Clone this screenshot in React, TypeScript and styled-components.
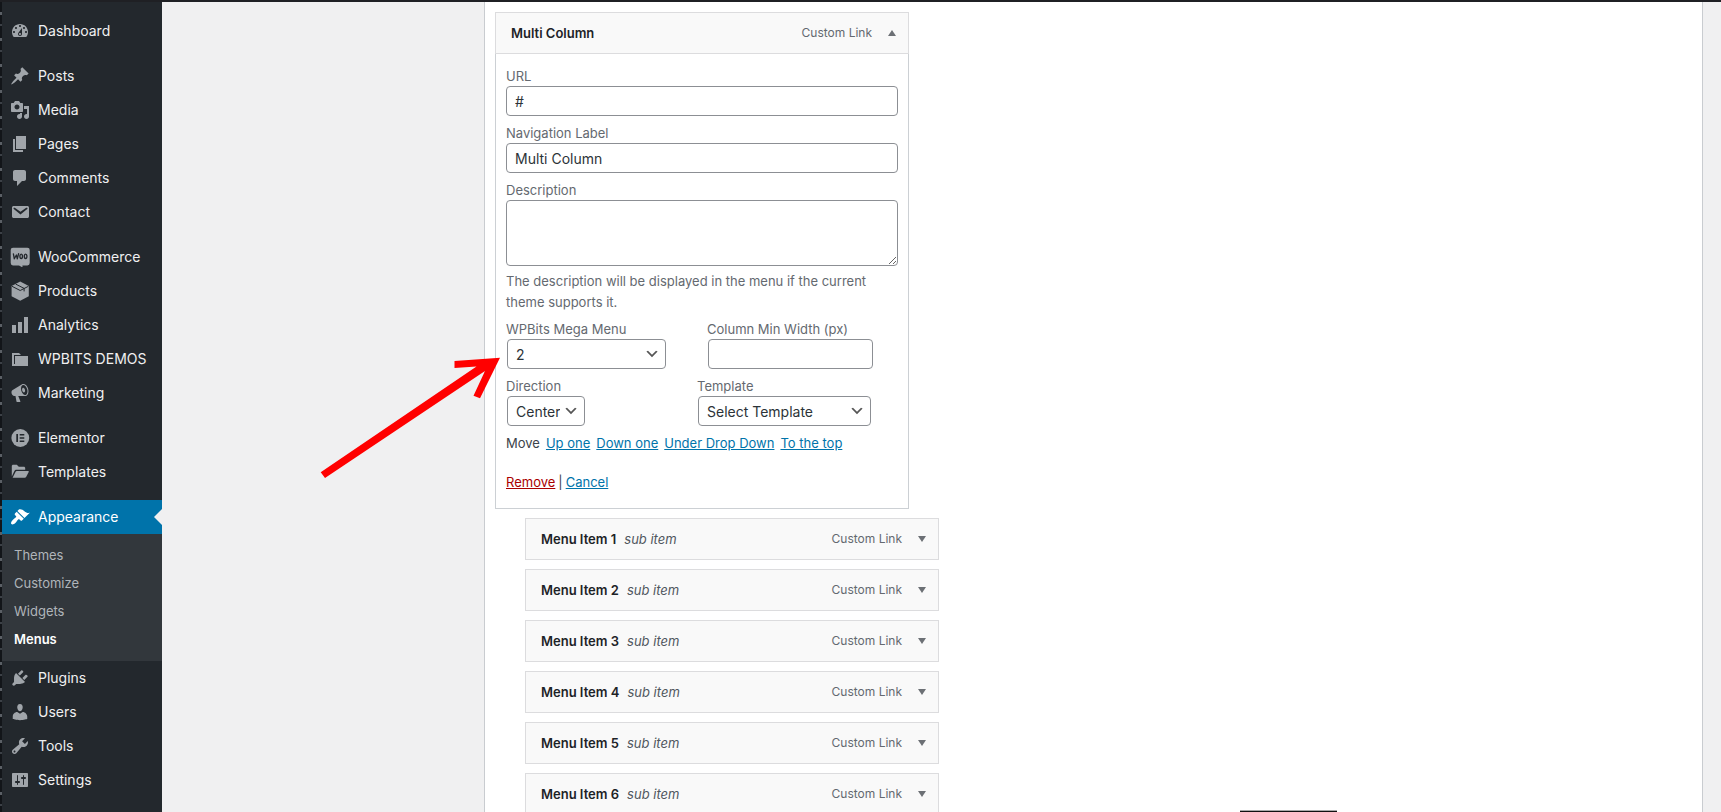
import React from "react";
import styled, { createGlobalStyle, css } from "styled-components";

const GlobalStyle = createGlobalStyle`
  *, *::before, *::after { box-sizing: border-box; }
  html { scrollbar-width: none; }
  body {
    margin: 0;
    background: #f0f0f1;
    color: #3c434a;
    font-family: Inter, "Liberation Sans", sans-serif;
    font-size: 13px;
    line-height: 20px;
  }
  ul { list-style: none; margin: 0; padding: 0; }
`;

const Page = styled.div`
  position: relative;
  height: 100vh;
  overflow: hidden;
  display: flex;
  border-top: 2px solid #1f2024;
`;

const WindowEdge = styled.div`
  flex: none;
  width: 2px;
  background: repeating-linear-gradient(#121519 0 10px, #5b6066 10px 13px, #121519 13px 22px, #3c4147 22px 24px, #121519 24px 26px);
`;

const Sidebar = styled.nav`
  flex: none;
  width: 160px;
  padding-top: 12px;
  background: #23282d;
`;

const MenuGroup = styled.ul`
  margin-bottom: 11px;
`;

const MenuLink = styled.a<{ $active?: boolean }>`
  position: relative;
  display: flex;
  align-items: center;
  gap: 8px;
  height: 34px;
  padding-left: 8px;
  color: ${(p) => (p.$active ? "#fff" : "#f0f0f1")};
  font-size: 14px;
  text-decoration: none;
  white-space: nowrap;
  svg {
    flex: none;
    width: 20px;
    height: 20px;
    fill: ${(p) => (p.$active ? "#fff" : "#a0a5aa")};
  }
  ${(p) =>
    p.$active &&
    css`
      background: #0073aa;
      &::after {
        content: "";
        position: absolute;
        right: 0;
        top: 9px;
        border: 8px solid transparent;
        border-left-width: 0;
        border-right-color: #f0f0f1;
      }
    `}
`;

const SubMenu = styled.ul`
  padding: 7px 0 8px;
  background: #32373c;
`;

const SubLink = styled.a<{ $current?: boolean }>`
  display: block;
  padding-left: 12px;
  font-size: 13px;
  line-height: 28px;
  text-decoration: none;
  color: ${(p) => (p.$current ? "#fff" : "#b0b5ba")};
  font-weight: ${(p) => (p.$current ? 600 : 400)};
`;

const Main = styled.main`
  flex: 1;
  min-width: 0;
  display: flex;
  padding: 0 18px 0 322px;
`;

const Panel = styled.section`
  flex: 1;
  min-width: 0;
  background: #fff;
  border: solid #c9ccd0;
  border-width: 0 1px;
  padding: 10px 10px 0;
`;

const ItemList = styled.ul`
  display: flex;
  flex-direction: column;
  gap: 9px;
`;

const Item = styled.li<{ $depth?: number }>`
  position: relative;
  width: 414px;
  margin-left: ${(p) => (p.$depth ?? 0) * 30}px;
`;

const ItemBar = styled.div`
  display: flex;
  align-items: center;
  height: 42px;
  padding: 0 6px 0 15px;
  background: #f9f9f9;
  border: 1px solid #dcdcde;
`;

const ItemTitle = styled.span`
  color: #1d2327;
  font-weight: 600;
`;

const SubTag = styled.span`
  margin-left: 8px;
  color: #50575e;
  font-style: italic;
`;

const ItemType = styled.span`
  margin-left: auto;
  margin-right: 10px;
  color: #646970;
  font-size: 12px;
`;

const Toggle = styled.button`
  display: grid;
  place-items: center;
  width: 20px;
  height: 20px;
  padding: 0;
  border: 0;
  background: none;
  svg {
    width: 8px;
    height: 6px;
    fill: #6c7075;
  }
`;

const Settings = styled.form`
  padding: 12px 10px 16px;
  border: 1px solid #ccd0d4;
  border-top: 0;
`;

const Field = styled.div`
  display: flex;
  flex-direction: column;
  align-items: flex-start;
  margin-bottom: 7px;
`;

const Label = styled.label`
  color: #646970;
  line-height: 20px;
`;

const controlStyle = css`
  border: 1px solid #8c8f94;
  border-radius: 4px;
  background: #fff;
  color: #2c3338;
  font-family: inherit;
  font-size: 14px;
  outline: none;
`;

const TextInput = styled.input<{ $width?: number }>`
  ${controlStyle}
  width: ${(p) => (p.$width ? `${p.$width}px` : "100%")};
  margin: ${(p) => (p.$width ? "0 1px" : "0")};
  height: 30px;
  padding: 0 8px;
`;

const TextArea = styled.textarea`
  ${controlStyle}
  display: block;
  width: 100%;
  height: 66px;
  padding: 2px 6px;
`;

const Hint = styled.p`
  margin: 5px 0 6px;
  color: #646970;
  line-height: 21px;
`;

const FieldRow = styled.div<{ $first: number }>`
  display: grid;
  grid-template-columns: ${(p) => p.$first}px 1fr;
`;

const SelectBox = styled.div<{ $width: number }>`
  position: relative;
  width: ${(p) => p.$width}px;
  margin: 0 1px;
  svg {
    position: absolute;
    right: 6px;
    top: 7px;
    width: 16px;
    height: 16px;
    pointer-events: none;
  }
`;

const Select = styled.select`
  ${controlStyle}
  appearance: none;
  display: block;
  width: 100%;
  height: 30px;
  padding: 0 24px 0 8px;
`;

const MoveLinks = styled.div`
  display: flex;
  gap: 6px;
  margin-bottom: 19px;
`;

const Link = styled.a<{ $danger?: boolean }>`
  color: ${(p) => (p.$danger ? "#a00" : "#0073aa")};
  text-decoration: underline;
`;

const Actions = styled.div`
  display: flex;
  gap: 3px;
`;

const Arrow = styled.svg`
  position: absolute;
  left: -175px;
  top: 345px;
  width: 181px;
  height: 122px;
  fill: #f00;
  pointer-events: none;
`;

const StatusEdge = styled.div`
  position: absolute;
  right: 384px;
  bottom: 0;
  width: 97px;
  height: 2px;
  background: #111;
  border-top: 1px solid #aaa;
`;

const icons: Record<string, React.ReactNode> = {
  dashboard: (
    <path d="M3.76 16h12.48c1.1-1.37 1.76-3.11 1.76-5 0-4.42-3.58-8-8-8s-8 3.58-8 8c0 1.89.66 3.63 1.76 5zM10 4c.55 0 1 .45 1 1s-.45 1-1 1-1-.45-1-1 .45-1 1-1zM6 6c.55 0 1 .45 1 1s-.45 1-1 1-1-.45-1-1 .45-1 1-1zm8 0c.55 0 1 .45 1 1s-.45 1-1 1-1-.45-1-1 .45-1 1-1zm-5.37 5.55L12 7v6c0 1.1-.9 2-2 2s-2-.9-2-2c0-.57.24-1.08.63-1.45zM4 10c.55 0 1 .45 1 1s-.45 1-1 1-1-.45-1-1 .45-1 1-1zm12 0c.55 0 1 .45 1 1s-.45 1-1 1-1-.45-1-1 .45-1 1-1zm-5 3c0-.55-.45-1-1-1s-1 .45-1 1 .45 1 1 1 1-.45 1-1z" fillRule="evenodd" />
  ),
  posts: (
    <path d="M10.44 3.02l1.82-1.82 6.36 6.35-1.83 1.82c-1.05-.68-2.48-.57-3.41.36l-.75.75c-.92.93-1.04 2.35-.35 3.41l-1.83 1.82-2.41-2.41-2.8 2.79c-.42.42-3.38 2.71-3.8 2.29s1.86-3.39 2.28-3.81l2.79-2.79L4.1 9.36l1.83-1.82c1.05.69 2.48.57 3.4-.36l.75-.75c.93-.92 1.05-2.35.36-3.41z" />
  ),
  media: (
    <path d="M13 11V4c0-.55-.45-1-1-1h-1.67L9 1H5L3.67 3H2c-.55 0-1 .45-1 1v7c0 .55.45 1 1 1h10c.55 0 1-.45 1-1zM7 4.5c1.38 0 2.5 1.12 2.5 2.5S8.38 9.5 7 9.5 4.5 8.38 4.5 7 5.62 4.5 7 4.5zM14 6h5v10.5c0 1.38-1.12 2.5-2.5 2.5S14 17.88 14 16.5s1.12-2.5 2.5-2.5c.17 0 .34.02.5.05V9h-3V6zm-4 8.05V13h2v3.5c0 1.38-1.12 2.5-2.5 2.5S7 17.88 7 16.5 8.12 14 9.5 14c.17 0 .34.02.5.05z" fillRule="evenodd" />
  ),
  pages: <path d="M6 15V2h10v13H6zm-1 1h8v2H3V5h2v11z" />,
  comments: (
    <path d="M5 2h9c1.1 0 2 .9 2 2v7c0 1.1-.9 2-2 2h-2l-5 5v-5H5c-1.1 0-2-.9-2-2V4c0-1.1.9-2 2-2z" />
  ),
  contact: (
    <path d="M3.87 4h13.25C18.37 4 19 4.59 19 5.79v8.42c0 1.19-.63 1.79-1.88 1.79H3.87c-1.25 0-1.88-.6-1.88-1.79V5.79c0-1.2.63-1.79 1.88-1.79zm6.62 8.6l6.74-5.53c.24-.2.43-.66.13-1.07-.29-.41-.82-.42-1.17-.17l-5.7 3.86L4.8 5.83c-.35-.25-.88-.24-1.17.17-.3.41-.11.87.13 1.07z" />
  ),
  woo: (
    <>
      <path d="M3 .8h14.4A2.3 2.3 0 0 1 19.7 3.1v13a2.3 2.3 0 0 1-2.3 2.3h-5L12.6 20.5l-3.6-2.1H3A2.3 2.3 0 0 1 .7 16.1v-13A2.3 2.3 0 0 1 3 .8z" />
      <g fill="none" stroke="#23282d" strokeWidth="1.3" strokeLinecap="round" strokeLinejoin="round">
        <path d="M3.4 6.8l.9 5 2.1-3.8.9 3.8 1.3-5.2" />
        <ellipse cx="11.2" cy="9.3" rx="1.3" ry="2.2" />
        <ellipse cx="15.6" cy="9.3" rx="1.3" ry="2.2" />
      </g>
    </>
  ),
  products: (
    <>
      <path d="M10.2.4l8.6 4.5v10.3l-8.6 4.6-8.6-4.6V4.9z" />
      <path d="M2 5.3l8.2 4.2 8.2-4.2M5.7 3.1l8.4 4.3v3" fill="none" stroke="#23282d" strokeWidth="1" />
    </>
  ),
  analytics: <path d="M18 18V2h-4v16h4zm-6 0V7H8v11h4zm-6 0v-8H2v8h4z" />,
  demos: <path d="M5 7h13v10H2V4h7l2 2H4v9h1V7z" />,
  marketing: (
    <path d="M18.15 5.94c.46 1.62.38 3.22-.02 4.48-.42 1.28-1.26 2.18-2.3 2.48-.16.06-.26.06-.4.06-.06.02-.12.02-.18.02-.06.02-.14.02-.22.02h-6.8l2.22 5.5c.02.14-.06.26-.14.34-.08.1-.24.16-.34.16H6.95c-.1 0-.26-.06-.34-.16-.08-.08-.16-.2-.14-.34l-1-5.5H4.25l-.02-.02c-.5.06-1.08-.18-1.54-.62s-.88-1.08-1.06-1.88c-.24-.8-.2-1.56-.02-2.2.18-.62.58-1.08 1.06-1.3l.02-.02 9-5.4c.1-.06.18-.1.24-.16.06-.04.14-.08.24-.12.16-.08.28-.12.5-.18 1.04-.3 2.24.1 3.22.98s1.84 2.24 2.26 3.86zm-2.58 5.98h-.02c.4-.1.74-.34 1.04-.7.58-.7.86-1.76.86-3.04 0-.64-.1-1.3-.28-1.98-.34-1.36-1.02-2.5-1.78-3.24s-1.68-1.1-2.46-.88c-.82.22-1.4.96-1.7 2-.32 1.04-.28 2.36.06 3.72.38 1.36 1 2.5 1.8 3.24.78.74 1.62 1.1 2.48.88zm-2.54-7.08c.22-.04.42-.02.62.04.38.16.76.48 1.02 1s.42 1.2.42 1.78c0 .3-.04.56-.12.8-.18.48-.44.84-.86.94-.34.1-.8-.06-1.14-.4s-.64-.86-.78-1.5c-.18-.62-.12-1.24.02-1.72s.48-.84.82-.94z" />
  ),
  elementor: (
    <>
      <circle cx="10.3" cy="10" r="8.9" />
      <path d="M6.3 6h1.7v8H6.3zM9.7 6h4.6v1.6H9.7zM9.7 9.2h4.6v1.6H9.7zM9.7 12.4h4.6V14H9.7z" fill="#23282d" />
    </>
  ),
  templates: (
    <path d="M1.8 14.5V4.2c0-.8.6-1.4 1.4-1.4h3.6l2 2h5c.8 0 1.4.6 1.4 1.4v1.5H6.5c-.9 0-1.7.5-2.1 1.2zM2.6 15.8l3-6c.2-.5.7-.8 1.2-.8h11.3c.5 0 .8.6.6 1l-2.6 5c-.3.5-.8.8-1.4.8z" />
  ),
  appearance: (
    <path d="M14.48 11.06L7.41 3.99l1.5-1.5c.5-.56 2.3-.47 3.51.32 1.21.8 1.43 1.28 2.91 2.1 1.18.64 2.45 1.26 4.45.85zm-.71.71L6.7 4.7 4.93 6.47c-.39.39-.39 1.02 0 1.41l1.06 1.06c.39.39.39 1.03 0 1.42-.6.6-1.43 1.11-2.21 1.69-.35.26-.7.53-1.01.84C1.43 14.23.4 16.08 1.4 17.07c.99 1 2.84-.03 4.18-1.36.31-.31.58-.66.85-1.02.57-.78 1.08-1.61 1.69-2.21.39-.39 1.02-.39 1.41 0l1.06 1.06c.39.39 1.02.39 1.41 0z" />
  ),
  plugins: (
    <path d="M13.11 4.36L9.87 7.6 8 5.73l3.24-3.24c.35-.34 1.05-.2 1.56.32.52.51.66 1.21.31 1.55zm-8 1.77l.91-1.12 9.01 9.01-1.19.84c-.71.71-2.63 1.16-3.82 1.16H6.14L4.9 17.26c-.59.59-1.54.59-2.12 0-.59-.58-.59-1.53 0-2.12l1.24-1.24v-3.88c0-1.13.4-3.19 1.09-3.89zm7.26 3.97l3.24-3.24c.34-.35 1.04-.21 1.55.31.52.51.66 1.21.31 1.55l-3.24 3.25z" />
  ),
  users: (
    <path d="M10 9.25c-2.27 0-2.73-3.44-2.73-3.44C7 4.02 7.82 2 9.97 2c2.16 0 2.98 2.02 2.71 3.81 0 0-.41 3.44-2.68 3.44zm0 2.57L12.72 10c2.39 0 4.52 2.33 4.52 4.53v2.49s-3.65 1.13-7.24 1.13c-3.65 0-7.24-1.13-7.24-1.13v-2.49c0-2.25 1.94-4.48 4.47-4.48z" />
  ),
  tools: (
    <path d="M16.68 9.77c-1.34 1.34-3.3 1.67-4.95.99l-5.41 6.52c-.99.99-2.59.99-3.58 0s-.99-2.59 0-3.57l6.52-5.42c-.68-1.65-.35-3.61.99-4.95 1.28-1.28 3.12-1.62 4.72-1.06l-2.89 2.89 2.82 2.82 2.86-2.87c.53 1.58.18 3.39-1.08 4.65zM3.81 16.21c.4.39 1.04.39 1.43 0 .4-.4.4-1.04 0-1.43-.39-.4-1.03-.4-1.43 0-.39.39-.39 1.03 0 1.43z" fillRule="evenodd" />
  ),
  settings: (
    <path d="M18 16V4c0-.55-.45-1-1-1H3c-.55 0-1 .45-1 1v12c0 .55.45 1 1 1h14c.55 0 1-.45 1-1zM8 11h1c.55 0 1 .45 1 1s-.45 1-1 1H8v1.5c0 .28-.22.5-.5.5s-.5-.22-.5-.5V13H6c-.55 0-1-.45-1-1s.45-1 1-1h1V5.5c0-.28.22-.5.5-.5s.5.22.5.5V11zm5-2h-1c-.55 0-1-.45-1-1s.45-1 1-1h1V5.5c0-.28.22-.5.5-.5s.5.22.5.5V7h1c.55 0 1 .45 1 1s-.45 1-1 1h-1v5.5c0 .28-.22.5-.5.5s-.5-.22-.5-.5V9z" fillRule="evenodd" />
  ),
};

type Entry = { icon: string; label: string };

const groups: Entry[][] = [
  [{ icon: "dashboard", label: "Dashboard" }],
  [
    { icon: "posts", label: "Posts" },
    { icon: "media", label: "Media" },
    { icon: "pages", label: "Pages" },
    { icon: "comments", label: "Comments" },
    { icon: "contact", label: "Contact" },
  ],
  [
    { icon: "woo", label: "WooCommerce" },
    { icon: "products", label: "Products" },
    { icon: "analytics", label: "Analytics" },
    { icon: "demos", label: "WPBITS DEMOS" },
    { icon: "marketing", label: "Marketing" },
  ],
  [
    { icon: "elementor", label: "Elementor" },
    { icon: "templates", label: "Templates" },
  ],
  [
    { icon: "appearance", label: "Appearance" },
    { icon: "plugins", label: "Plugins" },
    { icon: "users", label: "Users" },
    { icon: "tools", label: "Tools" },
    { icon: "settings", label: "Settings" },
  ],
];

const appearancePages = ["Themes", "Customize", "Widgets", "Menus"];

function MenuEntry({ icon, label }: Entry) {
  const active = icon === "appearance";
  return (
    <li>
      <MenuLink href="#" $active={active}>
        <svg viewBox="0 0 20 20" aria-hidden="true">
          {icons[icon]}
        </svg>
        {label}
      </MenuLink>
      {active && (
        <SubMenu>
          {appearancePages.map((name) => (
            <li key={name}>
              <SubLink href="#" $current={name === "Menus"}>
                {name}
              </SubLink>
            </li>
          ))}
        </SubMenu>
      )}
    </li>
  );
}

function ItemHeader({ title, sub, open }: { title: string; sub?: boolean; open?: boolean }) {
  return (
    <ItemBar>
      <ItemTitle>{title}</ItemTitle>
      {sub && <SubTag>sub item</SubTag>}
      <ItemType>Custom Link</ItemType>
      <Toggle type="button" aria-label={`Toggle ${title}`} aria-expanded={!!open}>
        <svg viewBox="0 0 8 6" aria-hidden="true">
          <path d={open ? "M4 0l4 6H0z" : "M0 0h8L4 6z"} />
        </svg>
      </Toggle>
    </ItemBar>
  );
}

function SelectField(props: { id: string; label: string; value: string; width: number }) {
  return (
    <Field>
      <Label htmlFor={props.id}>{props.label}</Label>
      <SelectBox $width={props.width}>
        <Select id={props.id} defaultValue={props.value}>
          <option>{props.value}</option>
        </Select>
        <svg viewBox="0 0 20 20" aria-hidden="true">
          <path d="M5 6l5 5 5-5 2 1-7 7-7-7 2-1z" fill="#555" />
        </svg>
      </SelectBox>
    </Field>
  );
}

export default function App() {
  return (
    <>
      <GlobalStyle />
      <Page>
        <WindowEdge />
        <Sidebar aria-label="Main menu">
          {groups.map((group) => (
            <MenuGroup key={group[0].label}>
              {group.map((entry) => (
                <MenuEntry key={entry.label} {...entry} />
              ))}
            </MenuGroup>
          ))}
        </Sidebar>
        <Main>
          <Panel>
            <ItemList>
              <Item>
                <ItemHeader title="Multi Column" open />
                <Settings>
                  <Field>
                    <Label htmlFor="url">URL</Label>
                    <TextInput id="url" defaultValue="#" />
                  </Field>
                  <Field>
                    <Label htmlFor="nav-label">Navigation Label</Label>
                    <TextInput id="nav-label" defaultValue="Multi Column" />
                  </Field>
                  <Label htmlFor="description">Description</Label>
                  <TextArea id="description" />
                  <Hint>The description will be displayed in the menu if the current theme supports it.</Hint>
                  <FieldRow $first={201}>
                    <SelectField id="mega-menu" label="WPBits Mega Menu" value="2" width={159} />
                    <Field>
                      <Label htmlFor="min-width">Column Min Width (px)</Label>
                      <TextInput id="min-width" $width={165} />
                    </Field>
                  </FieldRow>
                  <FieldRow $first={191}>
                    <SelectField id="direction" label="Direction" value="Center" width={78} />
                    <SelectField id="template" label="Template" value="Select Template" width={173} />
                  </FieldRow>
                  <MoveLinks>
                    <span>Move</span>
                    <Link href="#">Up one</Link>
                    <Link href="#">Down one</Link>
                    <Link href="#">Under Drop Down</Link>
                    <Link href="#">To the top</Link>
                  </MoveLinks>
                  <Actions>
                    <Link href="#" $danger>
                      Remove
                    </Link>
                    <span>|</span>
                    <Link href="#">Cancel</Link>
                  </Actions>
                </Settings>
                <Arrow viewBox="320 357 181 122" aria-hidden="true">
                  <path d="M320.7 472.3L476.5 366.4 454.5 368V361L500 357.7 480 398.3 473.5 395.7 485 371 325 478z" />
                </Arrow>
              </Item>
              {[1, 2, 3, 4, 5, 6].map((n) => (
                <Item key={n} $depth={1}>
                  <ItemHeader title={`Menu Item ${n}`} sub />
                </Item>
              ))}
            </ItemList>
          </Panel>
        </Main>
        <StatusEdge />
      </Page>
    </>
  );
}
